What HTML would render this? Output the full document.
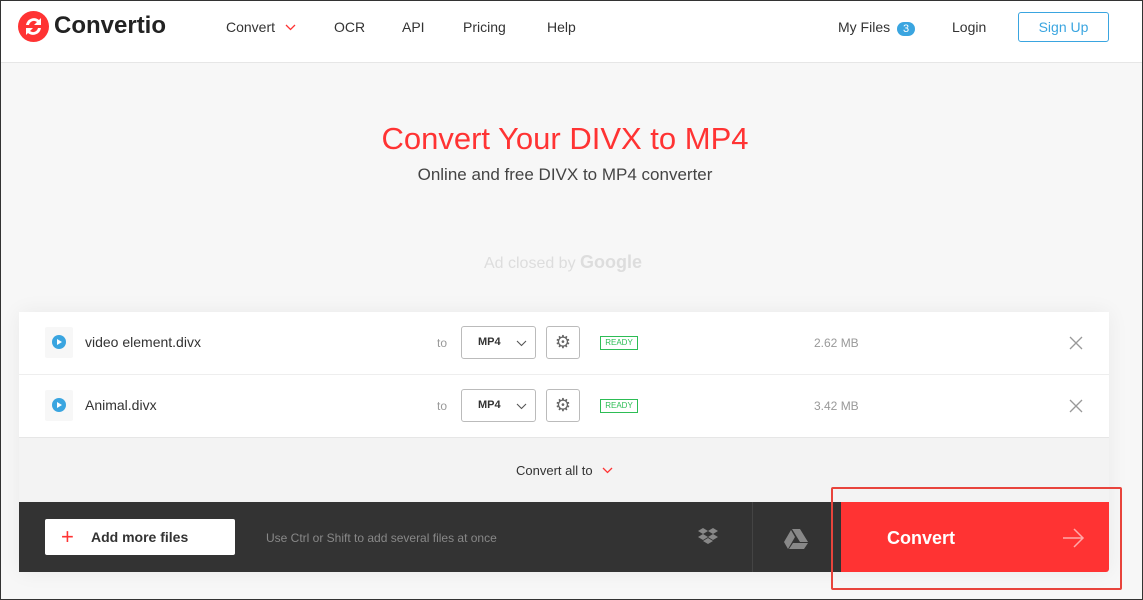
<!DOCTYPE html><html><head><style>
*{box-sizing:border-box;margin:0;padding:0}
body{width:1143px;height:600px;overflow:hidden;font-family:"Liberation Sans",sans-serif;background:#f7f7f7;position:relative;border:1px solid #333}
.hdr{position:absolute;left:0;top:0;width:1141px;height:62px;background:#fff;border-bottom:1px solid #e6e6e6}
.a{position:absolute;font-size:14px;color:#333}
</style></head><body>
<div class="hdr">
<svg style="position:absolute;left:17px;top:10px" width="31" height="31" viewBox="0 0 31 31"><circle cx="15.5" cy="15.5" r="15.5" fill="#ff3333"/><path d="M8 14a8 8 0 0 1 13-5l2-2v7h-7l3-3a5 5 0 0 0-8 3z M23 17a8 8 0 0 1-13 5l-2 2v-7h7l-3 3a5 5 0 0 0 8-3z" fill="#fff"/></svg>
<div class="a" style="left:53px;top:11px;font-size:24px;font-weight:bold;color:#222">Convertio</div>
<div class="a" style="left:225px;top:18px">Convert</div>
<svg style="position:absolute;left:284px;top:23px" width="11" height="7"><path d="M1 1l4.5 4.5L10 1" stroke="#f33" fill="none" stroke-width="1.3"/></svg>
<div class="a" style="left:333px;top:18px">OCR</div>
<div class="a" style="left:401px;top:18px">API</div>
<div class="a" style="left:462px;top:18px">Pricing</div>
<div class="a" style="left:546px;top:18px">Help</div>
<div class="a" style="left:837px;top:18px">My Files <span style="display:inline-block;background:#3aa5e0;color:#fff;border-radius:8px;font-size:11px;padding:1px 6px;margin-left:3px">3</span></div>
<div class="a" style="left:951px;top:18px">Login</div>
<div class="a" style="left:1017px;top:11px;width:91px;height:30px;border:1px solid #3aa5e0;border-radius:3px;color:#3aa5e0;text-align:center;line-height:28px">Sign Up</div>
</div>
<div class="a" style="left:0;width:1128px;top:120px;text-align:center;font-size:31px;color:#f33">Convert Your DIVX to MP4</div>
<div class="a" style="left:0;width:1128px;top:164px;text-align:center;font-size:17px;color:#444">Online and free DIVX to MP4 converter</div>
<div class="a" style="left:0;width:1124px;top:251px;text-align:center;font-size:16px;color:#ddd">Ad closed by <b style="font-size:18px">Google</b></div>
<div style="position:absolute;left:18px;top:311px;width:1090px;height:260px;background:#f3f3f3;box-shadow:0 0 20px rgba(0,0,0,.06)"></div>
<div style="position:absolute;left:18px;top:311px;width:1090px;height:126px;background:#fff"></div>
<div style="position:absolute;left:18px;top:373px;width:1090px;height:1px;background:#eee"></div>
<div style="position:absolute;left:18px;top:436px;width:1090px;height:1px;background:#e6e6e6"></div>
<div id="r"></div>
<div class="a" style="left:515px;top:462px;font-size:13px">Convert all to</div>
<svg style="position:absolute;left:601px;top:466px" width="11" height="7"><path d="M1 1l4.5 4.5L10 1" stroke="#f33" fill="none" stroke-width="1.3"/></svg>
<div style="position:absolute;left:18px;top:501px;width:822px;height:70px;background:#333"></div>
<div style="position:absolute;left:751px;top:501px;width:1px;height:70px;background:#444"></div>
<div style="position:absolute;left:44px;top:518px;width:190px;height:36px;background:#fff;border-radius:2px"><span style="position:absolute;left:16px;top:5px;color:#f33;font-size:22px">+</span><span style="position:absolute;left:46px;top:10px;font-size:14px;font-weight:bold;color:#333">Add more files</span></div>
<div class="a" style="left:265px;top:530px;font-size:12px;color:#888">Use Ctrl or Shift to add several files at once</div>
<svg style="position:absolute;left:696px;top:527px" width="22" height="20" viewBox="0 0 22 20" fill="#888"><path d="M6 0 11 3 6 6 1 3zM16 0 21 3 16 6 11 3zM1 9 6 6 11 9 6 12zM11 9 16 6 21 9 16 12zM6 13 11 10 16 13 11 16z"/></svg>
<svg style="position:absolute;left:783px;top:528px" width="24" height="20" viewBox="0 0 24 20" fill="#888"><path d="M8 0h8l8 13h-8zM7 1l4 7-7 12-4-7zM9 14h15l-4 6H5z"/></svg>
<div style="position:absolute;left:840px;top:501px;width:268px;height:70px;background:#f33;border-radius:0 0 3px 0"></div>
<div class="a" style="left:886px;top:527px;font-size:18px;font-weight:bold;color:#fff">Convert</div>
<svg style="position:absolute;left:1062px;top:527px" width="22" height="20"><path d="M0 10h20M11 1l9 9-9 9" stroke="#ffaaaa" fill="none" stroke-width="1.5"/></svg>
<div style="position:absolute;left:830px;top:486px;width:291px;height:103px;border:2px solid #e8443c;border-radius:2px"></div>
<script>
var h='';[['video element.divx','2.62 MB',311],['Animal.divx','3.42 MB',374]].forEach(function(r){var t=r[2];
h+='<div style="position:absolute;left:44px;top:'+(t+15)+'px;width:28px;height:31px;background:#f7f7f7;border-radius:2px"><svg style="position:absolute;left:7px;top:8px" width="14" height="14"><circle cx="7" cy="7" r="7" fill="#3aa5e0"/><path d="M5 4v6l5-3z" fill="#fff"/></svg></div>'+
'<div class="a" style="left:84px;top:'+(t+22)+'px;font-size:14px">'+r[0]+'</div>'+
'<div class="a" style="left:436px;top:'+(t+24)+'px;font-size:12px;color:#999">to</div>'+
'<div style="position:absolute;left:460px;top:'+(t+14)+'px;width:75px;height:33px;border:1px solid #bbb;border-radius:3px"><span style="position:absolute;left:16px;top:9px;font-size:11px;font-weight:bold;color:#333">MP4</span><svg style="position:absolute;left:54px;top:13px" width="11" height="7"><path d="M1 1l4.5 4.5L10 1" stroke="#555" fill="none" stroke-width="1.1"/></svg></div>'+
'<div style="position:absolute;left:545px;top:'+(t+14)+'px;width:34px;height:33px;border:1px solid #bbb;border-radius:3px;text-align:center;line-height:31px;color:#666;font-size:18px">&#9881;</div>'+
'<div style="position:absolute;left:599px;top:'+(t+24)+'px;width:38px;height:14px;border:1px solid #2dbd55;font-size:8px;color:#2dbd55;text-align:center;line-height:12px">READY</div>'+
'<div class="a" style="left:813px;top:'+(t+24)+'px;font-size:12px;color:#999">'+r[1]+'</div>'+
'<svg style="position:absolute;left:1068px;top:'+(t+24)+'px" width="14" height="14"><path d="M1 1l12 12M13 1 1 13" stroke="#999" stroke-width="1.3"/></svg>';});
document.getElementById('r').outerHTML=h;
</script>
</body></html>
